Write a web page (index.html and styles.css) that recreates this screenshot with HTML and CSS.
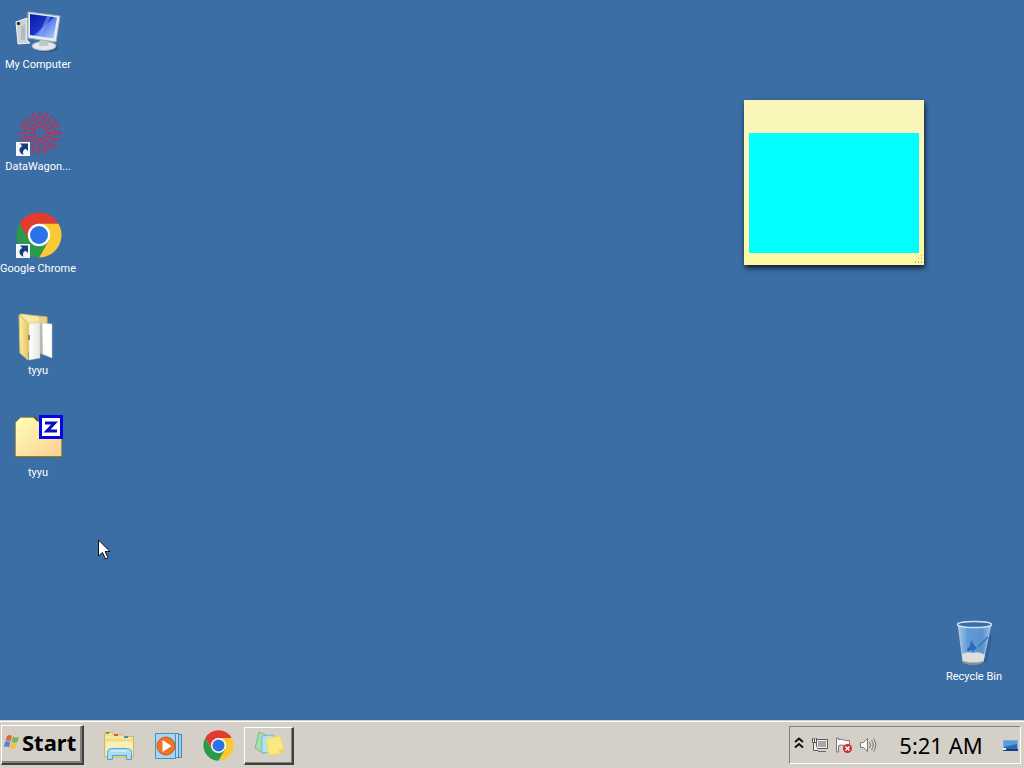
FILE: index.html
```html
<!DOCTYPE html>
<html lang="en">
<head>
<meta charset="utf-8">
<title>Desktop</title>
<link rel="stylesheet" href="styles.css">
</head>
<body>
<svg class="defs" aria-hidden="true">
  <defs>
    <linearGradient id="screen" x1="0" y1="0" x2="1" y2="1"><stop offset="0" stop-color="#0a1a9c"/><stop offset=".5" stop-color="#1c35cf"/><stop offset=".52" stop-color="#5a7cf0"/><stop offset="1" stop-color="#b4d8f8"/></linearGradient>
    <linearGradient id="folder" x1="0" y1="0" x2="1" y2="1"><stop offset="0" stop-color="#ffffb8"/><stop offset="1" stop-color="#fbcf92"/></linearGradient>
    <linearGradient id="leaf" x1="0" y1="0" x2="1" y2="0"><stop offset="0" stop-color="#fdf0a8"/><stop offset="1" stop-color="#e6c662"/></linearGradient>
    <linearGradient id="paper" x1="0" y1="0" x2="1" y2="0"><stop offset="0" stop-color="#fff"/><stop offset="1" stop-color="#e6e6e2"/></linearGradient>
    <linearGradient id="glass" x1="0" y1="0" x2="1" y2="0"><stop offset="0" stop-color="#a9c9ea"/><stop offset=".3" stop-color="#5f9ad6"/><stop offset=".75" stop-color="#5b93cf"/><stop offset="1" stop-color="#9fc3e6"/></linearGradient>
    <symbol id="chrome" viewBox="-23 -23 46 46">
      <path fill="#e33b2e" d="M-19.5-11.2A22.5 22.5 0 0 1 19.5-11.2H0L-9.7 5.6z"/>
      <path fill="#fcc934" d="M19.5-11.2A22.5 22.5 0 0 1 0 22.5L9.7 5.6 0-11.2z"/>
      <path fill="#2c9a48" d="M0 22.5A22.5 22.5 0 0 1-19.5-11.2L-9.7 5.6H9.7z"/>
      <circle r="11.2" fill="#fff"/><circle r="9" fill="#2a73e8"/>
    </symbol>
    <symbol id="shortcut" viewBox="0 0 14 14">
      <path fill="#f4f6fa" d="M0 0h14v14H0z"/>
      <path fill="#173d7c" d="M4 1.500h8v7.500L9.500 6.800C7 8 6.500 10 7.500 12.800 2.500 11 2.200 6 6.200 4z"/>
    </symbol>
  </defs>
</svg>

<main class="desktop">
  <div class="icons">
    <button class="shortcut" type="button">
      <svg class="art" viewBox="0 0 48 48" aria-hidden="true">
        <path fill="#cfd2d2" stroke="#f4f4f2" d="M2 14l11-4v22l3 3-12 1z"/>
        <path fill="#b4babd" d="M7 18l4-1v15H7z"/><circle cx="4.500" cy="15.500" r="1.700" fill="#263238"/>
        <ellipse cx="32" cy="40" rx="12" ry="4" fill="#28578b"/>
        <ellipse cx="30" cy="38" rx="12" ry="4.500" fill="#e4e8ea" stroke="#a5b2bd"/>
        <path fill="#bfc9d1" d="M26 30h9l-1 8h-9z"/>
        <path fill="#e8eef2" stroke="#9eb0c0" d="M14 4l32 4-4 26-28-4z"/>
        <path fill="url(#screen)" d="M16 6l27 3.500-3.500 21L16 27z"/>
        <path fill="#8ea9f5" opacity=".5" d="M33 8l4 .500-10 20-3-.500z"/>
      </svg>
      <span class="caption">My Computer</span>
    </button>
    <button class="shortcut" type="button">
      <svg class="art" viewBox="0 0 48 48" aria-hidden="true">
        <g fill="none" stroke="#d0284a" transform="translate(26 23)">
          <circle r="6" stroke-width="2" stroke-dasharray="2 1"/>
          <circle r="10.500" stroke-width="3" stroke-dasharray="2 2" opacity=".8"/>
          <circle r="15" stroke-width="3" stroke-dasharray="3 3" opacity=".8"/>
          <circle r="19.500" stroke-width="3" stroke-dasharray="2 4" opacity=".8"/>
          <path opacity=".75" d="M0-21V-5M0 5v17M-22 0h17M5 0h17M-16-15l12 11M4 4l13 12M-16 15L-4 4M4-4l12-11M-8-20l5 15M8-20L3-5M-8 20l5-15M8 20L3 5M-20-8l15 5M20-8L5-3M-20 8l15-5M20 8L5 3"/>
        </g>
        <use href="#shortcut" x="2" y="32" width="14" height="14"/>
      </svg>
      <span class="caption">DataWagon...</span>
    </button>
    <button class="shortcut" type="button">
      <svg class="art" viewBox="0 0 48 48" aria-hidden="true">
        <use href="#chrome" x="2" y="0" width="46" height="46"/>
        <use href="#shortcut" x="2" y="32" width="14" height="14"/>
      </svg>
      <span class="caption">Google Chrome</span>
    </button>
    <button class="shortcut" type="button">
      <svg class="art" viewBox="0 0 48 48" aria-hidden="true">
        <path fill="#e9d27e" stroke="#d7bb62" d="M6 0l27 3v6L14 38z"/>
        <path fill="#f6e9a8" d="M6 0l19 3v4l-9 3z"/>
        <path fill="url(#paper)" stroke="#c8c8bf" stroke-width=".5" d="M15 10l11-2v36l-11 2z"/>
        <path fill="#fff" stroke="#c8c8bf" stroke-width=".5" d="M28 9l10 1v34l-10-4z"/>
        <path fill="#b9b9ae" d="M26 10l2-1 1 32-3-2z"/>
        <path fill="url(#leaf)" stroke="#dac26c" d="M5 1l9 9v36L6 39z"/>
        <path fill="#8f8757" d="M14 21h2v5h-2z"/>
      </svg>
      <span class="caption">tyyu</span>
    </button>
    <button class="shortcut" type="button">
      <svg class="art" viewBox="0 0 48 48" aria-hidden="true">
        <path fill="url(#folder)" stroke="#a39a43" d="M1.500 40.500V6.500l5-5h14l4 4h23v35z"/>
        <path fill="none" stroke="#6b682c" d="M1 41h47"/><path stroke="#4a4a14" stroke-width="1.500" d="M20 1l4 4"/>
        <path fill="#fff" stroke="#0505e6" stroke-width="3" d="M26.500.500h21v21h-21z"/>
        <path fill="none" stroke="#0b0bc4" stroke-width="3" d="M31 7h9.500L33 15h10"/>
      </svg>
      <span class="caption">tyyu</span>
    </button>
  </div>

  <section class="note" aria-label="Sticky note">
    <div class="note-body"></div>
    <svg class="grip" viewBox="0 0 10 10" aria-hidden="true"><path fill="#b7aa72" d="M8 1h1v1H8zM5 4h1v1H5zM8 4h1v1H8zM2 7h1v2H2zM5 7h1v2H5zM8 7h1v2H8z"/></svg>
  </section>

  <button class="shortcut bin" type="button">
    <svg class="art" viewBox="0 0 48 48" aria-hidden="true">
      <path fill="#244f80" opacity=".4" d="M38 15l4 2-5 26-8 1z"/>
      <path fill="url(#glass)" stroke="#a9c4df" d="M8 4l5 38q10 4 20 0l8-38z"/>
      <path fill="#dedfdb" d="M12 34q5-3 11-1 7-2 12 2l-2 7q-10 4-20 0z"/>
      <path fill="#8b9299" d="M13 41q11 3 20 0v2q-10 4-20 0z"/>
      <path fill="#2c68b8" d="M17 29l3-3 1-6 3 5 3 3-4 3-3-1-2 2z"/>
      <path fill="none" stroke="#3c74b1" stroke-width="1.500" d="M28 27L38 17"/>
      <ellipse cx="24.500" cy="4.500" rx="17" ry="3" fill="#376da8" stroke="#d5e0ea" stroke-width="1.500"/>
    </svg>
    <span class="caption">Recycle Bin</span>
  </button>

  <svg class="pointer" viewBox="0 0 13 21" aria-hidden="true"><path fill="#fff" stroke="#111" d="M.500 1v16l4-3.500 3 6.500 2.500-1.200L7.200 12.500H12z"/></svg>
</main>

<footer class="taskbar">
  <button class="start" type="button">
    <svg class="flag" viewBox="0 0 16 16" aria-hidden="true">
      <path fill="#df6840" d="M3 2q3-2 5 0L6.500 7.500Q4 6 1.500 7z"/><path fill="#79b456" d="M9 2.500q3 2 6 0L13.500 8q-3 1.500-6 0z"/>
      <path fill="#4a87d4" d="M1 8q3-1.500 5.200.500L5 13.500Q3 12 0 13z"/><path fill="#eec33f" d="M7 9q3 1.500 6 0l-1.500 5q-3 2-6 0z"/>
    </svg>
    <span>Start</span>
  </button>
  <nav class="tasks" aria-label="Programs">
    <button class="task" type="button" aria-label="Explorer">
      <svg class="task-icon" viewBox="0 0 34 34" aria-hidden="true">
        <path fill="#f6e7a0" stroke="#d5b85e" d="M2.500 28V3.500h7l2 2h9l2 2h9V28z"/>
        <path fill="#eedb89" d="M3 10h28v2H3zM3 6h18v1H3z"/>
        <path stroke="#59a44d" stroke-width="2" d="M4 4h3"/><path stroke="#d45843" stroke-width="2" d="M12 6h4"/><path stroke="#438bc8" stroke-width="2" d="M22 8h4"/>
        <path fill="#f9efb8" d="M4 13h26v13H4z"/>
        <path fill="#a9dcf2" stroke="#4ca6d4" d="M5.500 30.500v-7q0-4 5-4h14q5 0 5 4v7h-5v-4h-14v4z"/>
        <path stroke="#e0f5fd" d="M9 22h16"/>
      </svg>
    </button>
    <button class="task" type="button" aria-label="Media Player">
      <svg class="task-icon" viewBox="0 0 34 34" aria-hidden="true">
        <path fill="#9fd0ee" stroke="#3f8abd" d="M11.500 5.500h18v23h-18z"/>
        <path fill="#b5def5" stroke="#3f8abd" d="M8.500 4.500h18v24h-18z"/>
        <path fill="#a8d6f2" stroke="#4691c3" d="M3.500 4.500h20v25h-20z"/>
        <circle cx="14" cy="17" r="9" fill="#ee7526" stroke="#cf5718"/><path fill="#fff" d="M10.500 11l9 6-9 6z"/>
      </svg>
    </button>
    <button class="task" type="button" aria-label="Google Chrome">
      <svg class="task-icon" viewBox="0 0 34 34" aria-hidden="true"><use href="#chrome" x="1" y="1" width="31" height="31"/></svg>
    </button>
    <button class="task open" type="button" aria-label="Sticky Notes">
      <svg class="task-icon" viewBox="0 0 34 34" aria-hidden="true">
        <path fill="#a2e0ad" stroke="#77bd85" d="M7 4l9 4-4 18-9-6z"/>
        <path fill="#b5e2f5" stroke="#79badc" d="M10 8l12-1v17l-12 1z"/>
        <path fill="#fae982" stroke="#ecd866" d="M14 11l14-3 4 14-4 4-11 1z"/>
        <path fill="#e9ce59" d="M28 26l-1-4 5-1z"/>
      </svg>
    </button>
  </nav>
  <div class="tray">
    <button class="tray-item" type="button" aria-label="Show hidden icons">
      <svg class="tray-icon" viewBox="0 0 18 18" aria-hidden="true"><path fill="none" stroke="#111" stroke-width="2" d="M5 6l4-3.500L13 6M5 11.500L9 8l4 3.500"/></svg>
    </button>
    <button class="tray-item" type="button" aria-label="Network">
      <svg class="tray-icon" viewBox="0 0 18 18" aria-hidden="true">
        <path fill="#a7a7a5" stroke="#5d5d5d" d="M5.500 3.500h11v9h-11z"/><path fill="none" stroke="#eee" d="M6.500 4.500h9v7h-9z"/>
        <path stroke="#666" d="M7 15.500h8"/><path fill="#f4f4f4" stroke="#555" d="M1.500 2v4.500h1v8H7M5.500 2v4.500h-3M3.500 2v4"/>
      </svg>
    </button>
    <button class="tray-item" type="button" aria-label="Action Center">
      <svg class="tray-icon" viewBox="0 0 18 18" aria-hidden="true">
        <path fill="#fafafa" stroke="#777" d="M1.500 2v14h2V9.500q3-1 6 0h5V4.500h-4q-3-2-7-1V2z"/>
        <circle cx="12.500" cy="12.500" r="4.500" fill="#cf2a38"/><path stroke="#fff" stroke-width="1.500" d="M10.500 10.500l4 4m0-4l-4 4"/>
      </svg>
    </button>
    <button class="tray-item" type="button" aria-label="Volume">
      <svg class="tray-icon" viewBox="0 0 18 18" aria-hidden="true">
        <path fill="#f6f6f6" stroke="#777" d="M1.500 6.500h3l4-4v13l-4-4h-3z"/><path fill="none" stroke="#777" d="M10.500 6q2 3 0 6M12.500 4q3.500 5 0 10M14.500 2.500q4.500 6.500 0 13"/>
      </svg>
    </button>
    <time class="clock" datetime="05:21">5:21 AM</time>
    <button class="tray-item peek" type="button" aria-label="Show desktop">
      <svg class="tray-icon" viewBox="0 0 18 18" aria-hidden="true"><path fill="#2768b8" stroke="#7faedb" d="M1.500 4.500h14v10h-14z"/><path fill="#143f79" d="M1 13h15v2H1z"/><path fill="#5a98dc" d="M2 5h13v3L2 11z"/><path fill="#e8f0f8" d="M1 12h3v2H1z"/></svg>
    </button>
  </div>
</footer>
</body>
</html>
```
FILE: styles.css
```css
* { box-sizing: border-box; }

body {
  margin: 0;
  min-height: 100vh;
  display: flex;
  flex-direction: column;
  background: #3b6ea5;
  font-family: Tahoma, Roboto, sans-serif;
  font-size: 11px;
}

button {
  margin: 0;
  padding: 0;
  border: 0;
  background: none;
  color: inherit;
  font: inherit;
}

svg { display: block; flex: none; }

.defs { position: absolute; width: 0; height: 0; }

.desktop {
  position: relative;
  flex: 1;
  padding-top: 8px;
}

.icons {
  display: flex;
  flex-direction: column;
  align-items: flex-start;
  gap: 36px;
}

.shortcut {
  width: 76px;
  display: flex;
  flex-direction: column;
  align-items: center;
  color: #fff;
}

.art { width: 48px; height: 48px; overflow: visible; }

.caption { line-height: 18px; white-space: nowrap; }

.bin { position: absolute; right: 12px; bottom: 34px; }

.note {
  position: absolute;
  top: 100px;
  right: 100px;
  width: 180px;
  height: 165px;
  padding: 33px 5px 12px;
  background: linear-gradient(#faf5b8 0 33px, #f7f9bd 33px, #fdf8a2);
  box-shadow: 1px 3px 5px rgba(0, 0, 0, .75);
}

.note-body { height: 100%; background: #0ff; }

.grip { position: absolute; right: 1px; bottom: 1px; width: 10px; height: 10px; }

.pointer { position: absolute; left: 98px; top: 539px; width: 13px; height: 21px; }

.taskbar {
  height: 48px;
  display: flex;
  align-items: center;
  padding: 0 3px 0 1px;
  background: #d4d0c8;
  border-top: 1px solid #d4d0c8;
  box-shadow: inset 0 1px #fff;
}

.start {
  width: 83px;
  height: 40px;
  margin-right: 10px;
  padding: 0 0 4px 2px;
  display: flex;
  align-items: center;
  gap: 2px;
  border: 1px solid #fff;
  border-right: 2px solid #404040;
  border-bottom: 2px solid #404040;
  box-shadow: inset -2px -2px #808080;
  font: bold 22px "Comic Sans MS", "Noto Sans", sans-serif;
  color: #000;
}

.flag { width: 16px; height: 16px; }

.tasks { display: flex; padding-top: 2px; }

.task {
  width: 50px;
  height: 38px;
  display: flex;
  align-items: center;
  justify-content: center;
  border: 1px solid transparent;
}

.task.open {
  border-color: #fff #404040 #404040 #fff;
  border-right-width: 2px;
  border-bottom-width: 2px;
  box-shadow: inset -1px -1px #808080;
}

.task-icon { width: 34px; height: 34px; }

.tray {
  height: 38px;
  margin-left: auto;
  display: flex;
  align-items: center;
  border: 1px solid;
  border-color: #808080 #fff #fff #808080;
}

.tray-item {
  width: 24px;
  display: flex;
  justify-content: center;
}

.tray-item:first-child { width: 18px; }

.tray-icon { width: 18px; height: 18px; }

.clock {
  width: 122px;
  text-align: center;
  font: 22px "Comic Sans MS", "Noto Sans", sans-serif;
  color: #000;
}

.peek { width: 18px; }
```
